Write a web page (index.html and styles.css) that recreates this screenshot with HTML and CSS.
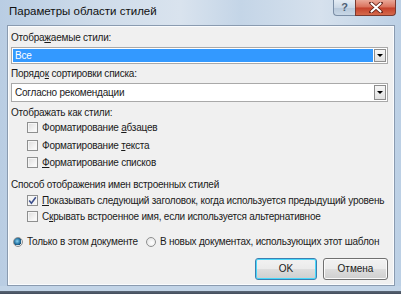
FILE: index.html
```html
<!DOCTYPE html>
<html lang="ru">
<head>
<meta charset="utf-8">
<link rel="stylesheet" href="styles.css">
</head>
<body>
<div class="window">
  <div class="titlebar">
    <span class="title">Параметры области стилей</span>
    <div class="controls">
      <div class="btn-help">?</div>
      <div class="btn-close">
        <svg width="14" height="11" viewBox="0 0 14 11"><path d="M2 1 L12 10 M12 1 L2 10" stroke="#5a1a10" stroke-width="3.6" stroke-linecap="round"/><path d="M2.5 1.5 L11.5 9.5 M11.5 1.5 L2.5 9.5" stroke="#ffffff" stroke-width="2.2" stroke-linecap="round"/></svg>
      </div>
    </div>
  </div>
  <div class="client">
    <div class="label l1">Отобра<u>ж</u>аемые стили:</div>
    <div class="combo combo-sel">
      <div class="combo-text sel">Все</div>
      <div class="drop"><span class="arrow"></span></div>
    </div>
    <div class="label l2">Порядо<u>к</u> сортировки списка:</div>
    <div class="combo combo-2">
      <div class="combo-text">Согласно рекомендации</div>
      <div class="drop"><span class="arrow"></span></div>
    </div>
    <div class="label l3">Отображать как стили:</div>
    <div class="checks checks-a">
      <div class="row"><span class="cb"></span><span>Форматирование <u>а</u>бзацев</span></div>
      <div class="row"><span class="cb"></span><span>Форматирование <u>т</u>екста</span></div>
      <div class="row"><span class="cb"></span><span><u>Ф</u>орматирование списков</span></div>
    </div>
    <div class="label l4">Способ отображения имен встроенных стилей</div>
    <div class="checks checks-b">
      <div class="row"><span class="cb checked"><svg width="9" height="9" viewBox="0 0 9 9"><path d="M1.2 4.6 L3.4 7.2 L7.8 1.2" fill="none" stroke="#3c4f8c" stroke-width="1.6"/></svg></span><span><u>П</u>оказывать следующий заголовок, когда используется предыдущий уровень</span></div>
      <div class="row"><span class="cb"></span><span>С<u>к</u>рывать встроенное имя, если используется альтернативное</span></div>
    </div>
    <div class="radios">
      <div class="radio-item"><span class="rb on"></span><span>Только в этом документе</span></div>
      <div class="radio-item second"><span class="rb"></span><span>В новых документах, использующих этот шаблон</span></div>
    </div>
    <div class="buttons">
      <div class="button default">OK</div>
      <div class="button cancel">Отмена</div>
    </div>
  </div>
  <div class="desk"></div>
</div>
</body>
</html>
```

FILE: styles.css
```css
html, body {
  margin: 0;
  padding: 0;
}
body {
  width: 401px;
  height: 294px;
  overflow: hidden;
  font-family: "Liberation Sans", Arial, sans-serif;
  font-size: 10px;
  letter-spacing: -0.22px;
  color: #1a1a1a;
  background: #3b4553;
}
u {
  text-decoration: underline;
  text-underline-offset: 1px;
}
.window {
  width: 401px;
  height: 294px;
  display: flex;
  flex-direction: column;
  background: linear-gradient(90deg, #b9cde3 0%, #cfdcea 25%, #d9e3ee 45%, #c4d5e7 60%, #d6e1ed 80%, #bcd0e5 100%);
  box-sizing: border-box;
  padding: 0 6px 0 7px;
}
.titlebar {
  height: 25px;
  display: flex;
  align-items: flex-start;
  flex-shrink: 0;
}
.title {
  font-size: 11.5px;
  letter-spacing: 0;
  color: #101010;
  margin-top: 5px;
  margin-left: 2px;
}
.controls {
  margin-left: auto;
  display: flex;
  margin-right: -1px;
}
.btn-help {
  width: 22px;
  height: 16px;
  box-sizing: border-box;
  border: 1px solid #7b8ea6;
  border-top: none;
  border-right: none;
  border-radius: 0 0 0 4px;
  background: linear-gradient(180deg, #e4ecf4 0%, #cbd8e6 50%, #b6c7da 51%, #c8d7e6 100%);
  color: #4f5f75;
  font-size: 11px;
  font-weight: bold;
  letter-spacing: 0;
  text-align: center;
  line-height: 15px;
}
.btn-close {
  width: 41px;
  height: 16px;
  box-sizing: border-box;
  border: 1px solid #7a3a30;
  border-top: none;
  border-radius: 0 0 4px 0;
  background: linear-gradient(180deg, #eaa898 0%, #d9705a 48%, #c4402a 52%, #d56a4c 100%);
  display: flex;
  align-items: center;
  justify-content: center;
}
.client {
  flex: 1;
  background: #f0f0f0;
  border: 1px solid #8a9bb0;
  box-shadow: inset 0 0 0 1px #fafcfe;
  padding: 6px 6px 5px 3px;
  display: flex;
  flex-direction: column;
  box-sizing: border-box;
}
.desk {
  height: 9px;
  flex-shrink: 0;
  background: linear-gradient(180deg, #c2d4e7 0%, #c2d4e7 60%, #566271 61%, #3b4553 100%);
  margin: 0 -6px 0 -7px;
}
.label {
  height: 12px;
  line-height: 12px;
  white-space: nowrap;
}
.l2 { margin-top: 4px; }
.l3 { margin-top: 5px; }
.l4 { margin-top: 7px; }
.combo {
  margin-top: 3px;
  border: 1px solid #a9a9a9;
  background: #ffffff;
  display: flex;
  align-items: stretch;
  box-sizing: border-box;
  padding: 1px;
}
.combo-sel { height: 17px; }
.combo-2 { height: 19px; }
.combo-text {
  flex: 1;
  padding-left: 2px;
  line-height: 13px;
  display: flex;
  align-items: center;
}
.combo-text.sel {
  background: #3399ff;
  color: #ffffff;
}
.drop {
  width: 12px;
  margin-left: 1px;
  border: 1px solid #8d8d8d;
  background: linear-gradient(180deg, #f6f6f6 0%, #e1e1e1 100%);
  display: flex;
  align-items: center;
  justify-content: center;
  box-sizing: border-box;
}
.arrow {
  width: 0;
  height: 0;
  border-left: 3px solid transparent;
  border-right: 3px solid transparent;
  border-top: 3px solid #000000;
}
.checks {
  display: flex;
  flex-direction: column;
}
.checks-a .row { height: 17.5px; }
.checks-b { margin-top: 2px; }
.checks-b .row { height: 16px; }
.row {
  display: flex;
  align-items: center;
  padding-left: 16px;
  white-space: nowrap;
}
.cb {
  width: 11px;
  height: 11px;
  box-sizing: border-box;
  border: 1px solid #8e8f8f;
  background: linear-gradient(135deg, #dcdcdc 0%, #f2f2f2 60%, #ffffff 100%);
  box-shadow: inset 0 0 0 1px #f6f6f6;
  margin-right: 4px;
  display: flex;
  align-items: center;
  justify-content: center;
  flex-shrink: 0;
}
.cb.checked {
  background: #f4f4f4;
}
.radios {
  margin-top: 9px;
  height: 16px;
  display: flex;
  align-items: center;
  padding-left: 2px;
  white-space: nowrap;
}
.radio-item {
  display: flex;
  align-items: center;
}
.radio-item.second { margin-left: 8px; }
.rb {
  width: 10px;
  height: 10px;
  border-radius: 50%;
  box-sizing: border-box;
  border: 1px solid #8e8f8f;
  background: radial-gradient(circle at 60% 60%, #ffffff 0%, #e4e4e4 80%);
  margin-right: 4px;
  flex-shrink: 0;
}
.rb.on {
  background: radial-gradient(circle at 40% 40%, #8ad2f0 0%, #1f6fa0 45%, #1f4f70 60%, #e8e8e8 62%);
}
.buttons {
  margin-top: 8px;
  display: flex;
  justify-content: flex-end;
  gap: 6px;
}
.button {
  height: 22px;
  box-sizing: border-box;
  border: 1px solid #707070;
  border-radius: 3px;
  background: linear-gradient(180deg, #f2f2f2 0%, #ebebeb 48%, #dddddd 52%, #cfcfcf 100%);
  box-shadow: inset 0 0 0 1px #fbfbfb;
  display: flex;
  align-items: center;
  justify-content: center;
  font-size: 10px;
  letter-spacing: 0;
}
.button.default {
  width: 62px;
  border-color: #3c7fb1;
  box-shadow: inset 0 0 0 1px #48d8fb;
}
.button.cancel {
  width: 65px;
}
```
